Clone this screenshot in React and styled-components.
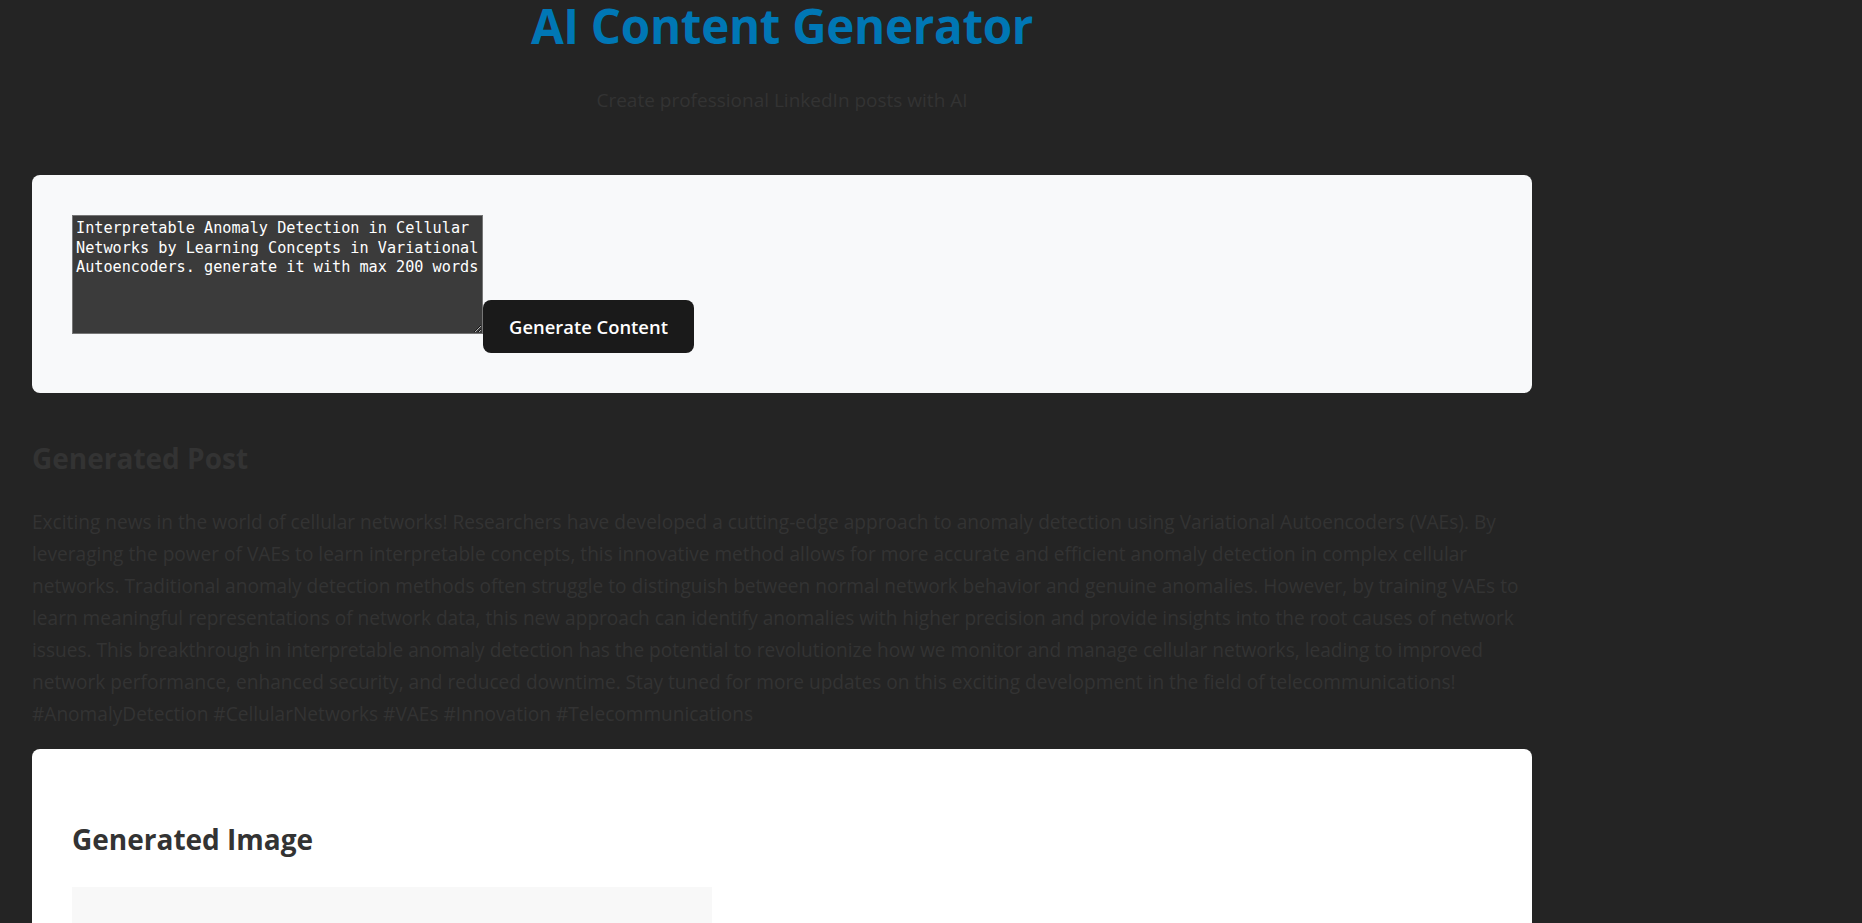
import React from "react";
import styled, { createGlobalStyle } from "styled-components";

const GlobalStyle = createGlobalStyle`
  html, body {
    margin: 0;
    padding: 0;
    background: #242424;
  }
  body {
    font-family: "Open Sans", "Noto Sans", Roboto, sans-serif;
    color: #333;
  }
  * { box-sizing: border-box; }
`;

const Page = styled.div`
  padding: 0 32px 40px;
`;

const Container = styled.main`
  max-width: 1500px;
`;

const Header = styled.header`
  text-align: center;
`;

const Title = styled.h1`
  margin: 0;
  color: #0077b5;
  font-size: 47.5px;
  font-weight: 700;
  line-height: 52px;
  letter-spacing: -0.3px;
`;

const Subtitle = styled.p`
  margin: 34px 0 0;
  color: #333;
  font-size: 19px;
  line-height: 28px;
`;

const Card = styled.section`
  margin-top: ${(p) => p.$gap}px;
  background: ${(p) => p.$bg};
  border-radius: 8px;
  padding: 40px;
`;

const InputRow = styled.div`
  display: flex;
  align-items: flex-start;
`;

const PromptArea = styled.textarea`
  width: 411px;
  height: 119px;
  margin: 0;
  padding: 3px;
  border: 1px solid #767676;
  border-radius: 0;
  background: #3b3b3b;
  color: #ffffff;
  font-family: "DejaVu Sans Mono", "Liberation Mono", monospace;
  font-size: 15.2px;
  line-height: 19.5px;
  outline: none;
`;

const GenerateButton = styled.button`
  margin-top: 85px;
  width: 211px;
  height: 53px;
  border: 1px solid transparent;
  border-radius: 8px;
  background: #1a1a1a;
  color: #ffffff;
  font-family: "Open Sans", "Noto Sans", sans-serif;
  font-size: 18.4px;
  font-weight: 600;
  line-height: 27px;
  cursor: pointer;
`;

const SectionTitle = styled.h2`
  margin: ${(p) => p.$top}px 0 0;
  color: #333;
  font-size: 28px;
  font-weight: 700;
  line-height: 36px;
`;

const PostText = styled.p`
  margin: 30px 0 0;
  color: #333;
  font-size: 19.1px;
  line-height: 32px;
`;

const ImagePlaceholder = styled.div`
  margin-top: 30px;
  width: 640px;
  height: 420px;
  background: #f8f8f8;
`;

const prompt =
  "Interpretable Anomaly Detection in Cellular Networks by Learning Concepts in Variational Autoencoders. generate it with max 200 words";

export default function App() {
  return (
    <>
      <GlobalStyle />
      <Page>
        <Container>
          <Header>
            <Title>AI Content Generator</Title>
            <Subtitle>Create professional LinkedIn posts with AI</Subtitle>
          </Header>

          <Card $bg="#f8f9fa" $gap={61}>
            <InputRow>
              <PromptArea defaultValue={prompt} spellCheck={false} />
              <GenerateButton>Generate Content</GenerateButton>
            </InputRow>
          </Card>

          <SectionTitle $top={47}>Generated Post</SectionTitle>
          <PostText>
            Exciting news in the world of cellular networks! Researchers have developed a
            cutting-edge approach to anomaly detection using Variational Autoencoders (VAEs). By
            leveraging the power of VAEs to learn interpretable concepts, this innovative method
            allows for more accurate and efficient anomaly detection in complex cellular networks.
            Traditional anomaly detection methods often struggle to distinguish between normal
            network behavior and genuine anomalies. However, by training VAEs to learn meaningful
            representations of network data, this new approach can identify anomalies with higher
            precision and provide insights into the root causes of network issues. This
            breakthrough in interpretable anomaly detection has the potential to revolutionize how
            we monitor and manage cellular networks, leading to improved network performance,
            enhanced security, and reduced downtime. Stay tuned for more updates on this exciting
            development in the field of telecommunications!
            <br />
            #AnomalyDetection #CellularNetworks #VAEs #Innovation #Telecommunications
          </PostText>

          <Card $bg="#ffffff" $gap={19}>
            <SectionTitle $top={32}>Generated Image</SectionTitle>
            <ImagePlaceholder />
          </Card>
        </Container>
      </Page>
    </>
  );
}
